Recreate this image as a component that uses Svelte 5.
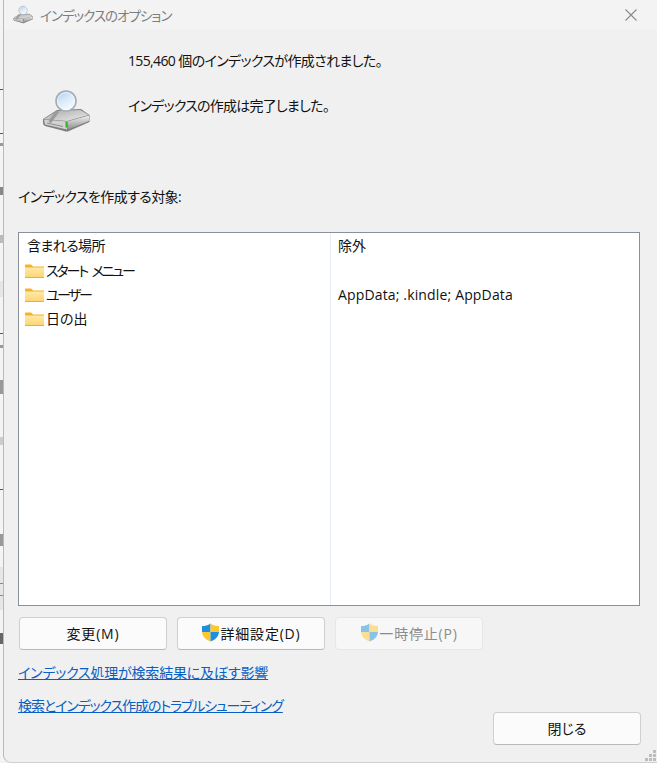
<script>
  const rows = [
    { name: 'スタート メニュー', spacing: -2.1, exclude: '' },
    { name: 'ユーザー', spacing: -2.5, exclude: 'AppData; .kindle; AppData' },
    { name: '日の出', spacing: 0, exclude: '' }
  ];
  // bits of the window behind the dialog that stick out on the left
  const behind = [
    { top: 281, h: 16, c: '#e6e6e6' },
    { top: 567, h: 43, c: '#e6e6e6' },
    { top: 89, h: 1, c: '#555' },
    { top: 133, h: 1, c: '#555' },
    { top: 143, h: 3, c: '#999' },
    { top: 187, h: 8, c: '#888' },
    { top: 235, h: 8, c: '#bbb' },
    { top: 333, h: 1, c: '#555' },
    { top: 345, h: 3, c: '#999' },
    { top: 380, h: 14, c: '#999' },
    { top: 437, h: 8, c: '#ccc' },
    { top: 489, h: 1, c: '#555' },
    { top: 534, h: 12, c: '#999' },
    { top: 583, h: 1, c: '#888' },
    { top: 595, h: 1, c: '#888' },
    { top: 633, h: 11, c: '#666' }
  ];
</script>

{#snippet driveIcon(size)}
  <svg width={size} height={size} viewBox="0 0 48 48" class="drive">
    <defs>
      <linearGradient id="body{size}" x1="0" y1="0" x2="0" y2="1">
        <stop offset="0" stop-color="#f0f0f0" />
        <stop offset="1" stop-color="#8f8f8f" />
      </linearGradient>
      <linearGradient id="top{size}" x1="0" y1="0" x2="1" y2="1">
        <stop offset="0" stop-color="#a8a8a8" />
        <stop offset="1" stop-color="#ececec" />
      </linearGradient>
      <linearGradient id="lens{size}" x1="0" y1="0" x2="0.6" y2="1">
        <stop offset="0" stop-color="#a9cbee" />
        <stop offset="0.55" stop-color="#dcebf9" />
        <stop offset="1" stop-color="#f6fafe" />
      </linearGradient>
    </defs>
    <path d="M1 31 L15 22 L39 21 L47.5 27 V34 L27 43 Q25 44 22 43 L3 38 Q1 37 1 35 Z" fill="#7f7f7f" />
    <path d="M2 31 L15 23 L38.5 22 L46.5 27 L25 33 Z" fill="url(#top{size})" />
    <path d="M25 33.5 L47 27.5 V33 L26 41.5 Z" fill="url(#body{size})" />
    <path d="M2 31.5 L25 33.5 V41.5 L3 36.5 Z" fill="#d2d2d2" />
    <path d="M5 35 L21 38.5" stroke="#8d8d8d" stroke-width="1" />
    <rect x="23.5" y="33.5" width="2" height="6" fill="#2fb526" />
    <path d="M8.5 33 L15 24" stroke="#9a9a9a" stroke-width="3.5" stroke-linecap="round" />
    <circle cx="24" cy="13" r="10" fill="url(#lens{size})" stroke="#a3adb7" stroke-width="1.6" />
    <circle cx="24" cy="13" r="8.4" fill="none" stroke="#ffffff" stroke-opacity="0.7" stroke-width="0.8" />
  </svg>
{/snippet}

{#snippet folder()}
  <svg width="19" height="15" viewBox="0 0 19 15" class="folder">
    <defs>
      <linearGradient id="fld" x1="0" y1="0" x2="0" y2="1">
        <stop offset="0" stop-color="#ffeaa8" />
        <stop offset="1" stop-color="#fdd36f" />
      </linearGradient>
    </defs>
    <path d="M0 1.5 Q0 .5 1 .5 H6 L8 2.5 H19 V5 H0 Z" fill="#f3b32b" />
    <path d="M0 3.5 H19 V14 H0 Z" fill="url(#fld)" />
    <path d="M0 13.5 H19" stroke="#e9ae3a" stroke-width="1" />
  </svg>
{/snippet}

{#snippet shield(dim)}
  <svg width="19" height="19" viewBox="0 0 19 19" class:dim>
    <path d="M9.5 .5 C7 2.5 4 3 1 3 V9 H9.5 Z" fill="#1e8fdc" />
    <path d="M9.5 .5 C12 2.5 15 3 18 3 V9 H9.5 Z" fill="#fdc82f" />
    <path d="M1 9 H9.5 V18.5 C5 17 1.5 14 1 9 Z" fill="#fdc82f" />
    <path d="M18 9 H9.5 V18.5 C14 17 17.5 14 18 9 Z" fill="#1e8fdc" />
  </svg>
{/snippet}

<div class="screen">
  <div class="behind">
    {#each behind as b}
      <i style="top: {b.top}px; height: {b.h}px; background: {b.c}"></i>
    {/each}
  </div>

  <div class="dialog">
    <header class="titlebar">
      {@render driveIcon(20)}
      <span class="title">インデックスのオプション</span>
      <svg class="close" width="14" height="14" viewBox="0 0 14 14">
        <path d="M1.5 1.5 L12.5 12.5 M12.5 1.5 L1.5 12.5" stroke="#8a8a8a" stroke-width="1.1" />
      </svg>
    </header>

    <main class="content">
      <section class="status">
        <div class="status-icon">{@render driveIcon(48)}</div>
        <div class="status-text">
          <p class="count">155,460 個のインデックスが作成されました。</p>
          <p class="done">インデックスの作成は完了しました。</p>
        </div>
      </section>

      <p class="label">インデックスを作成する対象:</p>

      <div class="table">
        <div class="col col-main">
          <div class="head">含まれる場所</div>
          {#each rows as r}
            <div class="row">{@render folder()}<span class="name" style="letter-spacing: {r.spacing}px">{r.name}</span></div>
          {/each}
        </div>
        <div class="col col-excl">
          <div class="head">除外</div>
          {#each rows as r}
            <div class="row">{r.exclude}</div>
          {/each}
        </div>
      </div>

      <div class="buttons">
        <button>変更(M)</button>
        <button>{@render shield(false)}詳細設定(D)</button>
        <button disabled>{@render shield(true)}一時停止(P)</button>
      </div>

      <a class="link first" href="#a">インデックス処理が検索結果に及ぼす影響</a>
      <a class="link second" href="#b">検索とインデックス作成のトラブルシューティング</a>

      <div class="footer">
        <button>閉じる</button>
      </div>
    </main>

    <svg class="grip" width="12" height="12" viewBox="0 0 12 12">
      <g fill="#bdbdbd">
        <rect x="8" y="0" width="3" height="3" />
        <rect x="4" y="4" width="3" height="3" />
        <rect x="8" y="4" width="3" height="3" />
        <rect x="0" y="8" width="3" height="3" />
        <rect x="4" y="8" width="3" height="3" />
        <rect x="8" y="8" width="3" height="3" />
      </g>
    </svg>
  </div>
</div>

<style>
  :global(body) {
    margin: 0;
    background: #f3f3f3;
  }
  .screen {
    display: flex;
    width: 657px;
    height: 763px;
    overflow: hidden;
    font-family: "Open Sans", "Noto Sans CJK JP", sans-serif;
    font-feature-settings: "palt";
    font-size: 14px;
    color: #111;
  }
  .behind {
    position: relative;
    width: 3px;
    background: #f4f4f4;
    flex: none;
  }
  .behind i {
    position: absolute;
    left: 0;
    width: 3px;
  }
  .dialog {
    position: relative;
    flex: 1;
    background: #f0f0f0;
    border-left: 1px solid #b9b9b9;
    border-bottom: 1px solid #d0d0d0;
    border-bottom-left-radius: 8px;
    display: flex;
    flex-direction: column;
    min-width: 0;
  }
  .titlebar {
    height: 30px;
    flex: none;
    background: #f3f3f3;
    display: flex;
    align-items: center;
    padding: 0 19px 0 9px;
    gap: 7px;
  }
  .title {
    color: #7d7d7d;
    flex: 1;
    font-size: 13.5px;
    letter-spacing: -1px;
  }
  .content {
    flex: 1;
    display: flex;
    flex-direction: column;
    padding: 0 16px 0 14px;
  }
  .status {
    display: flex;
    height: 158px;
    flex: none;
  }
  .status-icon {
    width: 110px;
    padding: 58px 0 0 24px;
    box-sizing: border-box;
  }
  .status-text {
    padding-top: 21px;
  }
  .status-text p {
    margin: 0;
    line-height: 20px;
  }
  .status-text .done {
    margin-top: 25px;
    letter-spacing: -0.77px;
  }
  .count {
    letter-spacing: -0.63px;
  }
  .label {
    margin: 0;
    height: 44px;
    line-height: 18px;
    letter-spacing: -0.6px;
  }
  .table {
    width: 622px;
    height: 374px;
    box-sizing: border-box;
    border: 1px solid #8a9099;
    background: #fff;
    display: flex;
    flex: none;
  }
  .col {
    box-sizing: border-box;
  }
  .col-main {
    width: 312px;
    border-right: 1px solid #e6ecf3;
    padding-left: 8px;
  }
  .col-excl {
    flex: 1;
    padding-left: 7px;
  }
  .head {
    height: 26px;
    line-height: 26px;
  }
  .col-main .head {
    letter-spacing: -0.6px;
  }
  .row {
    height: 24px;
    line-height: 24px;
    display: flex;
    align-items: center;
    gap: 2px;
    margin-left: -2px;
  }
  .name {
    word-spacing: 3px;
  }
  .col-excl .row {
    margin-left: 0;
    letter-spacing: 0.15px;
  }
  .folder {
    flex: none;
  }
  .buttons {
    display: flex;
    gap: 10px;
    margin-top: 11px;
    margin-left: 1px;
    letter-spacing: 0.8px;
  }
  button {
    width: 148px;
    height: 33px;
    box-sizing: border-box;
    background: #fbfbfb;
    border: 1px solid #cfcfcf;
    border-bottom-color: #b9b9b9;
    border-radius: 4px;
    font: inherit;
    font-feature-settings: inherit;
    letter-spacing: inherit;
    color: #111;
    display: flex;
    align-items: center;
    justify-content: center;
    padding: 0 0 2px;
  }
  button:disabled {
    background: #f7f7f7;
    border-color: #e6e6e6;
    color: #8c8c8c;
  }
  .dim {
    opacity: 0.5;
  }
  .link {
    color: #0a5fc4;
    text-decoration: underline;
    align-self: flex-start;
    line-height: 17px;
  }
  .first {
    margin-top: 14px;
    letter-spacing: -0.2px;
  }
  .second {
    margin-top: 16px;
    letter-spacing: -1.1px;
  }
  .footer {
    display: flex;
    justify-content: flex-end;
    margin-top: -2px;
  }
  .grip {
    position: absolute;
    right: 0;
    bottom: 0;
  }
</style>
